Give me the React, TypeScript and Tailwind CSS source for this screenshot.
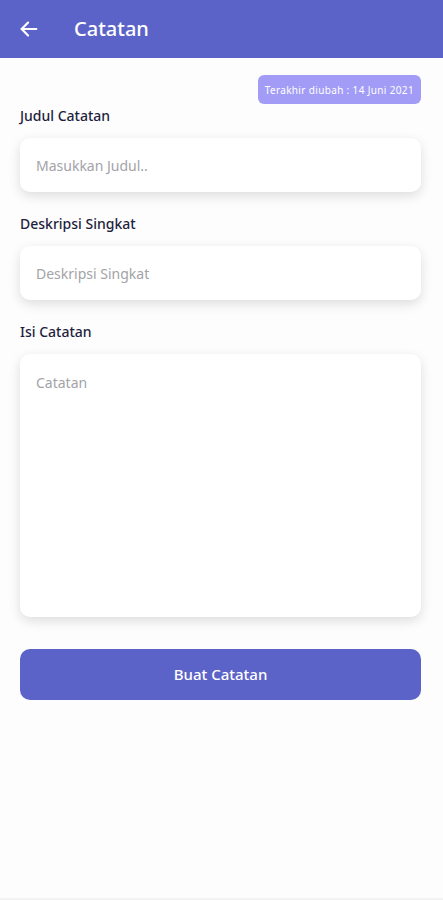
import React, { useState } from 'react';

const font = { fontFamily: '"Noto Sans", "Open Sans", sans-serif' };

function Field({ label, placeholder, value, onChange }: { label: string; placeholder: string; value: string; onChange: (v: string) => void }) {
  return (
    <div className="flex flex-col">
      <label className="text-[14px] font-medium text-[#1f1f3d] leading-[20px]">{label}</label>
      <input
        value={value}
        onChange={(e) => onChange(e.target.value)}
        placeholder={placeholder}
        className="mt-[12px] h-[54px] w-full rounded-[10px] bg-white px-[16px] text-[14px] text-gray-800 placeholder:text-[#a3a3a8] outline-none shadow-[0_4px_12px_rgba(0,0,0,0.13)]"
      />
    </div>
  );
}

export default function App() {
  const [judul, setJudul] = useState('');
  const [deskripsi, setDeskripsi] = useState('');
  const [isi, setIsi] = useState('');

  return (
    <div className="min-h-[900px] w-full bg-[#fdfdfd] flex flex-col" style={font}>
      {/* Header */}
      <div className="h-[58px] bg-[#5c63c8] flex items-center px-[18px] gap-[34px] shrink-0">
        <svg width="22" height="22" viewBox="0 0 24 24" fill="none" stroke="white" strokeWidth="2.4" strokeLinecap="round" strokeLinejoin="round">
          <path d="M20 12H4" />
          <path d="M11 5l-7 7 7 7" />
        </svg>
        <h1 className="text-[20px] font-medium text-white leading-none">Catatan</h1>
      </div>

      <div className="pl-[20px] pr-[22px] pt-[17px] flex flex-col">
        <div className="flex justify-end">
          <span className="h-[29px] px-[7px] flex items-center rounded-[6px] bg-[#a29cf6] text-white text-[10px] tracking-[0.35px] leading-none">
            Terakhir diubah : 14 Juni 2021
          </span>
        </div>

        <div className="mt-[2px] flex flex-col gap-[22px]">
          <Field label="Judul Catatan" placeholder="Masukkan Judul.." value={judul} onChange={setJudul} />
          <Field label="Deskripsi Singkat" placeholder="Deskripsi Singkat" value={deskripsi} onChange={setDeskripsi} />
          <div className="flex flex-col">
            <label className="text-[14px] font-medium text-[#1f1f3d] leading-[20px]">Isi Catatan</label>
            <textarea
              value={isi}
              onChange={(e) => setIsi(e.target.value)}
              placeholder="Catatan"
              className="mt-[12px] h-[263px] w-full resize-none rounded-[10px] bg-white px-[16px] pt-[18px] text-[14px] text-gray-800 placeholder:text-[#a3a3a8] outline-none shadow-[0_4px_12px_rgba(0,0,0,0.13)]"
            />
          </div>
        </div>

        <button className="mt-[32px] h-[51px] w-full rounded-[10px] bg-[#5c63c8] text-white text-[15px] font-medium">
          Buat Catatan
        </button>
      </div>

      <div className="flex-1" />
      <div className="h-[2px] bg-[#f3f3f3]" />
    </div>
  );
}
